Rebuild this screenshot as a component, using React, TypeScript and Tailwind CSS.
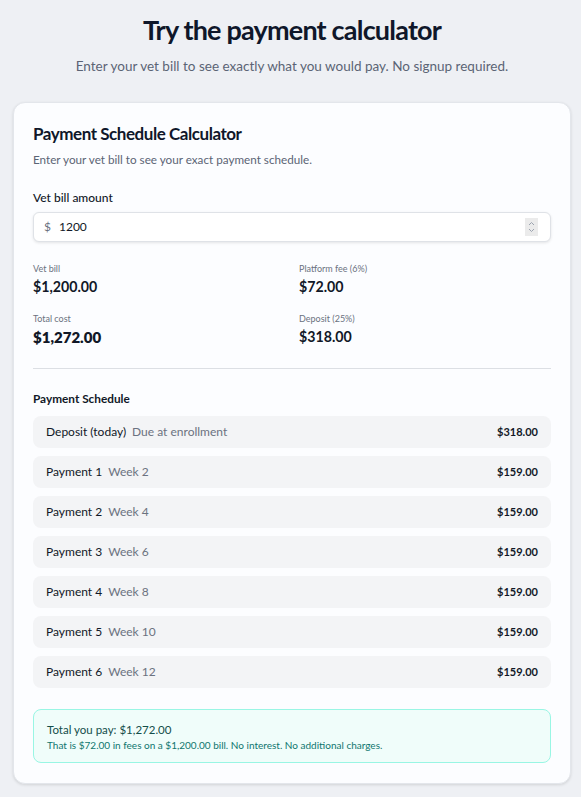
import * as React from 'react'

const BILL = 1200
const FEE_RATE = 0.06
const DEPOSIT_RATE = 0.25

function money(n: number) {
  return '$' + n.toLocaleString('en-US', { minimumFractionDigits: 2, maximumFractionDigits: 2 })
}

export default function App() {
  const [amount, setAmount] = React.useState(String(BILL))
  const bill = parseFloat(amount) || 0
  const fee = bill * FEE_RATE
  const total = bill + fee
  const deposit = total * DEPOSIT_RATE
  const each = (total - deposit) / 6

  const rows = [
    { label: 'Deposit (today)', sub: 'Due at enrollment', value: deposit },
    ...[1, 2, 3, 4, 5, 6].map((i) => ({ label: `Payment ${i}`, sub: `Week ${i * 2}`, value: each })),
  ]

  return (
    <div className="min-h-screen bg-[#eef0f4] pl-[13px] pr-[10px] pt-[13px] pb-[14px] font-['Lato',sans-serif] text-[#111827]">
      <div className="text-center">
        <h1 className="text-[27px] font-bold leading-[34px] tracking-[-0.8px] text-[#0f172a]">Try the payment calculator</h1>
        <p className="mt-[10px] text-[13.5px] leading-[18px] text-[#5b6475]">
          Enter your vet bill to see exactly what you would pay. No signup required.
        </p>
      </div>

      {/* calculator card */}
      <div className="mt-[27px] rounded-[12px] border border-[#e3e6eb] bg-[#fcfdff] px-[19px] pt-[19px] pb-[20px] shadow-[0_1px_3px_rgba(0,0,0,0.12)]">
        <h2 className="text-[17px] font-bold leading-[24px] tracking-[-0.45px] text-[#0f172a]">Payment Schedule Calculator</h2>
        <p className="mt-[5px] text-[11.7px] leading-[16px] text-[#5b6475]">Enter your vet bill to see your exact payment schedule.</p>

        <label className="mt-[23px] block text-[12px] font-medium leading-[16px]">Vet bill amount</label>
        <div className="mt-[6px] flex h-[30px] items-center rounded-[6px] border border-[#dfe2e7] bg-white pl-[10px] pr-[12px] shadow-[0_1px_3px_rgba(0,0,0,0.1)]">
          <span className="text-[12px] text-[#6b7280]">$</span>
          <input
            value={amount}
            onChange={(e) => setAmount(e.target.value)}
            className="ml-[8px] flex-1 bg-transparent text-[12px] outline-none"
          />
          <div className="flex h-[18px] w-[13px] flex-col items-center justify-center bg-[#ebebeb]">
            <svg width="7" height="14" viewBox="0 0 7 14" fill="none" stroke="#9ca3af" strokeWidth="1">
              <path d="M1 5l2.5-2.5L6 5" />
              <path d="M1 9l2.5 2.5L6 9" />
            </svg>
          </div>
        </div>

        {/* summary */}
        <div className="mt-[20px] grid grid-cols-2 gap-x-[14px] gap-y-[15px] pb-[21px]">
          <div>
            <div className="text-[9px] leading-[13px] text-[#6b7280]">Vet bill</div>
            <div className="mt-[2px] text-[14.2px] font-bold leading-[20px]">{money(bill)}</div>
          </div>
          <div>
            <div className="text-[9px] leading-[13px] text-[#6b7280]">Platform fee (6%)</div>
            <div className="mt-[2px] text-[14.2px] font-bold leading-[20px]">{money(fee)}</div>
          </div>
          <div>
            <div className="text-[9px] leading-[13px] text-[#6b7280]">Total cost</div>
            <div className="mt-[2px] text-[15px] font-extrabold leading-[20px]">{money(total)}</div>
          </div>
          <div>
            <div className="text-[9px] leading-[13px] text-[#6b7280]">Deposit (25%)</div>
            <div className="mt-[2px] text-[14.2px] font-bold leading-[20px]">{money(deposit)}</div>
          </div>
        </div>

        <div className="border-t border-[#dcdfe4] pt-[22px]">
          <h3 className="text-[11.8px] font-bold leading-[16px]">Payment Schedule</h3>
          <div className="mt-[9px] flex flex-col gap-[8px]">
            {rows.map((r) => (
              <div key={r.label} className="flex h-[32px] items-center justify-between rounded-[8px] bg-[#f3f4f6] px-[13px]">
                <div className="text-[12px]">
                  <span className="text-[#111827]">{r.label}</span>
                  <span className="ml-[6px] text-[#6b7280]">{r.sub}</span>
                </div>
                <span className="text-[11px] font-bold">{money(r.value)}</span>
              </div>
            ))}
          </div>
        </div>

        {/* total note */}
        <div className="mt-[21px] rounded-[8px] border border-[#99f6e4] bg-[#f0fdfa] px-[13px] pt-[11px] pb-[10px]">
          <div className="text-[11.5px] leading-[17px] text-[#134e4a]">Total you pay: {money(total)}</div>
          <div className="text-[10px] leading-[14px] text-[#0f766e]">
            That is {money(fee)} in fees on a {money(bill)} bill. No interest. No additional charges.
          </div>
        </div>
      </div>
    </div>
  )
}
